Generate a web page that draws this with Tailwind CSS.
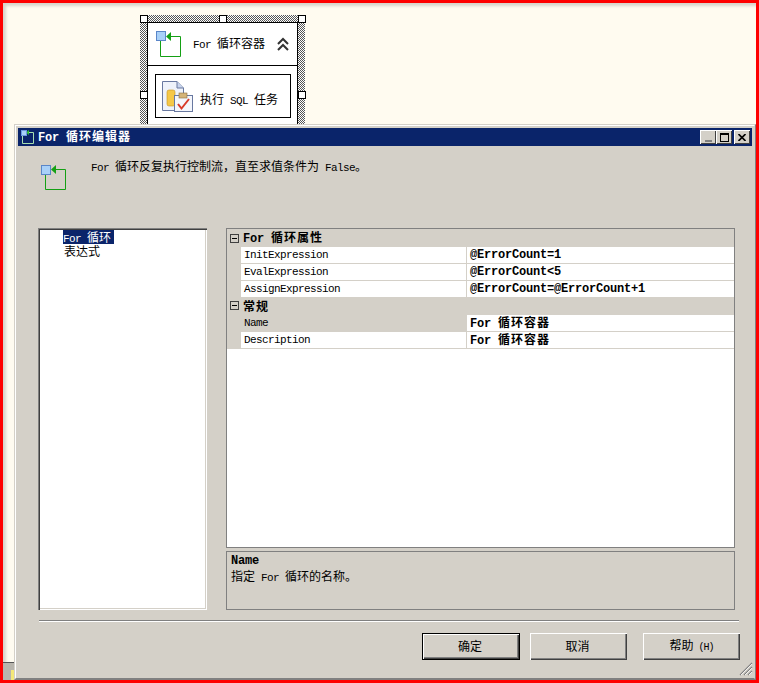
<!DOCTYPE html>
<html lang="zh-CN">
<head>
  <meta charset="UTF-8">
  <title>For 循环编辑器</title>
  <script src="https://cdn.jsdelivr.net/npm/@tailwindcss/browser@4"></script>
</head>
<body class="m-0 bg-white">
  <div class="relative w-[759px] h-[683px] overflow-hidden border-[3px] border-[#ff0000] bg-[#fffbf0] text-[12px] leading-[14px] text-black font-['Noto_Sans_CJK_SC',sans-serif] shadow-[inset_5px_5px_3px_-2px_#d8d5cc]">

    <!-- designer surface -->
    <div class="absolute left-[137px] top-[12px] w-[165px] h-[112px] p-[7px] pb-0 bg-[repeating-conic-gradient(#555_0_25%,#fff_0_50%)] bg-[length:2px_2px]">
      <div class="h-full border border-b-0 border-black bg-white">
        <div class="flex items-center h-[43px] border-b border-black">
          <svg class="ml-[8px] -mt-[1px] shrink-0" width="26" height="26" viewBox="0 0 26 26">
            <path d="M13 5.5H24.5V25.5H4.5V10" fill="none" stroke="#14a014"/>
            <path d="M10 5.5L15 1V10Z" fill="#14a014"/>
            <rect x=".5" y=".5" width="9" height="9" fill="#a8d0f8" stroke="#5a86c8"/>
          </svg>
          <span class="ml-[11px] w-[86px] whitespace-pre"><span class="font-['Liberation_Mono'] text-[11px] tracking-[-0.6px]">For </span>循环容器</span>
          <svg class="-ml-[2px]" width="12" height="14" viewBox="0 0 12 14">
            <path d="M1 7L6 2L11 7M1 13L6 8L11 13" fill="none" stroke="#333" stroke-width="2"/>
          </svg>
        </div>
        <div class="flex items-center w-[136px] h-[44px] ml-[7px] mt-[8px] border border-black">
          <svg class="ml-[6px] mt-[1px] shrink-0" width="32" height="32" viewBox="0 0 32 32">
            <path d="M.5 .5H15L21.5 7V29.5H.5Z" fill="#eef2fa" stroke="#6878a0"/>
            <path d="M15 .5V7H21.5" fill="#c8d4ec" stroke="#6878a0"/>
            <rect x="5" y="9" width="8" height="16" rx="2" fill="#f5c848" stroke="#c89420" stroke-width=".6"/>
            <rect x="12.5" y="14.5" width="18" height="16" fill="#f4f6fc" stroke="#6878a0"/>
            <rect x="17" y="12" width="8" height="5" fill="#d4b478" stroke="#8a7040" stroke-width=".6"/>
            <path d="M16 23L19.5 27.5L27 18" fill="none" stroke="#d83a2a" stroke-width="2"/>
          </svg>
          <span class="ml-[6px] mt-[7px] whitespace-pre">执行<span class="font-['Liberation_Mono'] text-[11px] tracking-[-0.6px]"> SQL </span>任务</span>
        </div>
      </div>
    </div>
    <div class="absolute left-[137px] top-[12px] w-[8px] h-[8px] bg-white border border-black"></div>
    <div class="absolute left-[216px] top-[12px] w-[8px] h-[8px] bg-white border border-black"></div>
    <div class="absolute left-[295px] top-[12px] w-[8px] h-[8px] bg-white border border-black"></div>
    <div class="absolute left-[137px] top-[88px] w-[8px] h-[8px] bg-white border border-black"></div>
    <div class="absolute left-[295px] top-[88px] w-[8px] h-[8px] bg-white border border-black"></div>

    <!-- bits of the window behind the dialog -->
    <div class="absolute left-0 top-[659px] w-[11px] h-[1px] bg-[#555]"></div>
    <div class="absolute left-0 top-[660px] w-[11px] h-[17px] bg-[#b8b5ad]"></div>
    <div class="absolute left-[8px] top-[667px] w-[3px] h-[10px] bg-[#f4e878]"></div>

    <!-- dialog -->
    <div class="absolute left-[11px] top-[121px] w-[742px] h-[556px] border border-[#d4d0c8] border-r-[#808080] border-b-[#808080] bg-[#d4d0c8]">
      <div class="relative h-full border border-white border-r-[#d4d0c8] border-b-[#808080] p-[2px]">

        <!-- title bar -->
        <div class="flex items-center h-[18px] bg-[#0a246a] text-white font-bold">
          <svg class="ml-[3px] shrink-0" width="14" height="14" viewBox="0 0 14 14">
            <path d="M6 2.5H12.5V13.5H1.5V6" fill="none" stroke="#a8e0b0"/>
            <path d="M5 2.5L8 0V5Z" fill="#30c030"/>
            <rect x=".5" y=".5" width="5" height="5" fill="#a8d0f8" stroke="#6a98e0"/>
          </svg>
          <span class="ml-[3px] whitespace-pre tracking-[1px]"><span class="font-['Liberation_Mono'] text-[12px] tracking-[-0.2px]">For </span>循环编辑器</span>
          <div class="flex ml-auto mr-[2px]">
            <div class="flex items-end justify-center w-[16px] h-[14px] pb-[2px] bg-[#d4d0c8] shadow-[inset_1px_1px_0_#fff,inset_-1px_-1px_0_#404040]"><div class="w-[7px] h-[2px] bg-[#808080]"></div></div>
            <div class="flex items-center justify-center w-[16px] h-[14px] bg-[#d4d0c8] shadow-[inset_1px_1px_0_#fff,inset_-1px_-1px_0_#404040]"><div class="w-[9px] h-[9px] border border-t-2 border-black"></div></div>
            <div class="flex items-center justify-center w-[16px] h-[14px] ml-[2px] bg-[#d4d0c8] shadow-[inset_1px_1px_0_#fff,inset_-1px_-1px_0_#404040]">
              <svg width="8" height="7" viewBox="0 0 8 7"><path d="M.5 0L7.5 7M7.5 0L.5 7" stroke="#000" stroke-width="1.6"/></svg>
            </div>
          </div>
        </div>

        <!-- description -->
        <div class="flex h-[82px] pt-[13px] pl-[23px]">
          <svg class="mt-[6px] shrink-0" width="26" height="26" viewBox="0 0 26 26">
            <path d="M13 4.5H24.5V24.5H4.5V10" fill="none" stroke="#14a014"/>
            <path d="M10 4.5L15 0V9Z" fill="#14a014"/>
            <rect x=".5" y=".5" width="9" height="9" fill="#a8d0f8" stroke="#5a86c8"/>
          </svg>
          <span class="ml-[24px] whitespace-pre"><span class="font-['Liberation_Mono'] text-[11px] tracking-[-0.6px]">For </span>循环反复执行控制流，直至求值条件为<span class="font-['Liberation_Mono'] text-[11px] tracking-[-0.6px]"> False</span>。</span>
        </div>

        <!-- main -->
        <div class="flex h-[382px] pl-[20px]">
          <div class="w-[169px] shrink-0 pt-[1px] bg-white shadow-[inset_1px_1px_0_#808080,inset_2px_2px_0_#404040,inset_-1px_-1px_0_#fff,inset_-2px_-2px_0_#d4d0c8]">
            <div class="h-[14px] mt-[1px] ml-[25px] w-[51px] bg-[#0a246a] text-white leading-[13px] whitespace-pre"><span class="font-['Liberation_Mono'] text-[11px] tracking-[-0.6px]">For </span>循环</div>
            <div class="h-[14px] ml-[26px] leading-[13px]">表达式</div>
          </div>

          <div class="flex flex-col w-[509px] ml-[19px]">
            <div class="h-[320px] border border-[#808080] bg-white">
              <div class="flex items-center h-[18px] bg-[#d4d0c8] font-bold">
                <div class="flex items-center justify-center shrink-0 w-[9px] h-[9px] ml-[3px] border border-[#404040]"><div class="w-[5px] h-[1px] bg-black"></div></div>
                <span class="ml-[4px] whitespace-pre tracking-[1px]"><span class="font-['Liberation_Mono'] text-[12px] tracking-[-0.2px]">For </span>循环属性</span>
              </div>
              <div class="flex h-[17px] bg-[#d4d0c8]">
                <div class="w-[14px] shrink-0"></div>
                <div class="w-[226px] shrink-0 pl-[3px] pt-[1px] bg-white border-b border-r border-[#d4d0c8] font-['Liberation_Mono'] text-[11px] tracking-[-0.6px]">InitExpression</div>
                <div class="flex-1 pl-[3px] pt-[1px] bg-white border-b border-[#d4d0c8] font-['Liberation_Mono'] font-bold text-[12px] tracking-[-0.2px]">@ErrorCount=1</div>
              </div>
              <div class="flex h-[17px] bg-[#d4d0c8]">
                <div class="w-[14px] shrink-0"></div>
                <div class="w-[226px] shrink-0 pl-[3px] pt-[1px] bg-white border-b border-r border-[#d4d0c8] font-['Liberation_Mono'] text-[11px] tracking-[-0.6px]">EvalExpression</div>
                <div class="flex-1 pl-[3px] pt-[1px] bg-white border-b border-[#d4d0c8] font-['Liberation_Mono'] font-bold text-[12px] tracking-[-0.2px]">@ErrorCount&lt;5</div>
              </div>
              <div class="flex h-[17px] bg-[#d4d0c8]">
                <div class="w-[14px] shrink-0"></div>
                <div class="w-[226px] shrink-0 pl-[3px] pt-[1px] bg-white border-b border-r border-[#d4d0c8] font-['Liberation_Mono'] text-[11px] tracking-[-0.6px]">AssignExpression</div>
                <div class="flex-1 pl-[3px] pt-[1px] bg-white border-b border-[#d4d0c8] font-['Liberation_Mono'] font-bold text-[12px] tracking-[-0.2px]">@ErrorCount=@ErrorCount+1</div>
              </div>
              <div class="flex items-center h-[17px] pb-[2px] bg-[#d4d0c8] font-bold">
                <div class="flex items-center justify-center shrink-0 w-[9px] h-[9px] ml-[3px] border border-[#404040]"><div class="w-[5px] h-[1px] bg-black"></div></div>
                <span class="ml-[4px] tracking-[1px]">常规</span>
              </div>
              <div class="flex h-[17px] bg-[#d4d0c8]">
                <div class="w-[14px] shrink-0"></div>
                <div class="w-[226px] shrink-0 pl-[3px] pt-[1px] border-b border-r border-[#d4d0c8] font-['Liberation_Mono'] text-[11px] tracking-[-0.6px]">Name</div>
                <div class="flex-1 pl-[3px] bg-white border-b border-[#d4d0c8] font-bold whitespace-pre tracking-[1px]"><span class="font-['Liberation_Mono'] text-[12px] tracking-[-0.2px]">For </span>循环容器</div>
              </div>
              <div class="flex h-[17px] bg-[#d4d0c8]">
                <div class="w-[14px] shrink-0"></div>
                <div class="w-[226px] shrink-0 pl-[3px] pt-[1px] bg-white border-b border-r border-[#d4d0c8] font-['Liberation_Mono'] text-[11px] tracking-[-0.6px]">Description</div>
                <div class="flex-1 pl-[3px] bg-white border-b border-[#d4d0c8] font-bold whitespace-pre tracking-[1px]"><span class="font-['Liberation_Mono'] text-[12px] tracking-[-0.2px]">For </span>循环容器</div>
              </div>
            </div>
            <div class="flex-1 mt-[3px] pt-[3px] pl-[4px] border border-[#808080]">
              <div class="h-[14px] leading-[12px] font-['Liberation_Mono'] font-bold text-[12px] tracking-[-0.2px]">Name</div>
              <div class="whitespace-pre">指定<span class="font-['Liberation_Mono'] text-[11px] tracking-[-0.6px]"> For </span>循环的名称。</div>
            </div>
          </div>
        </div>

        <!-- separator -->
        <div class="w-[700px] ml-[21px] mt-[10px] border-t border-b border-t-[#808080] border-b-white"></div>

        <!-- buttons -->
        <div class="flex mt-[11px] ml-[404px]">
          <button class="w-[98px] h-[27px] pb-[1px] pr-[2px] border border-black bg-[#d4d0c8] shadow-[inset_1px_1px_0_#fff,inset_-1px_-1px_0_#404040,inset_-2px_-2px_0_#808080]">确定</button>
          <button class="w-[97px] h-[27px] pb-[1px] pr-[2px] ml-[10px] bg-[#d4d0c8] shadow-[inset_1px_1px_0_#fff,inset_-1px_-1px_0_#404040,inset_-2px_-2px_0_#808080]">取消</button>
          <button class="w-[97px] h-[27px] ml-[16px] whitespace-pre bg-[#d4d0c8] shadow-[inset_1px_1px_0_#fff,inset_-1px_-1px_0_#404040,inset_-2px_-2px_0_#808080]">帮助<span class="font-['Liberation_Mono'] text-[10px] tracking-[-1px]"> (H)</span></button>
        </div>

        <!-- resize grip -->
        <svg class="absolute right-[1px] bottom-[2px]" width="14" height="14" viewBox="0 0 14 14">
          <path d="M1 13L13 1M5 13L13 5M9 13L13 9" stroke="#808080" stroke-width="1.2" fill="none"/>
          <path d="M2 13L13 2M6 13L13 6M10 13L13 10" stroke="#fff" stroke-width=".8" fill="none"/>
        </svg>
      </div>
    </div>
  </div>
</body>
</html>
